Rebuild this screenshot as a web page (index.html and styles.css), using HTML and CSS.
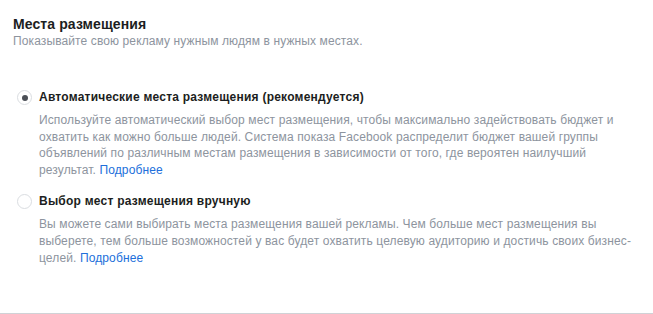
FILE: index.html
```html
<!DOCTYPE html>
<html lang="ru">
<head>
<meta charset="utf-8">
<link rel="stylesheet" href="styles.css">
</head>
<body>
<section class="section">
  <h2 class="title">Места размещения</h2>
  <p class="subtitle">Показывайте свою рекламу нужным людям в нужных местах.</p>
  <div class="options">
    <div class="option">
      <span class="radio radio-checked"></span>
      <div class="option-body">
        <div class="option-label">Автоматические места размещения (рекомендуется)</div>
        <p class="option-desc">Используйте автоматический выбор мест размещения, чтобы максимально задействовать бюджет и охватить как можно больше людей. Система показа Facebook распределит бюджет вашей группы объявлений по различным местам размещения в зависимости от того, где вероятен наилучший результат. <a class="link" href="#">Подробнее</a></p>
      </div>
    </div>
    <div class="option">
      <span class="radio"></span>
      <div class="option-body">
        <div class="option-label">Выбор мест размещения вручную</div>
        <p class="option-desc">Вы можете сами выбирать места размещения вашей рекламы. Чем больше мест размещения вы выберете, тем больше возможностей у вас будет охватить целевую аудиторию и достичь своих бизнес-целей. <a class="link" href="#">Подробнее</a></p>
      </div>
    </div>
  </div>
</section>
</body>
</html>
```
FILE: styles.css
```css
html, body {
  margin: 0;
  padding: 0;
  background: #ffffff;
}
body {
  font-family: "Liberation Sans", Arial, sans-serif;
  color: #1c1e21;
}
.section {
  box-sizing: border-box;
  height: 314px;
  padding: 15px 13px 0;
  border-bottom: 1px solid #d0d2d6;
}
.title {
  margin: 0;
  font-size: 14px;
  line-height: 18px;
  font-weight: bold;
  letter-spacing: 0.1px;
  color: #1c1e21;
}
.subtitle {
  margin: 0;
  font-size: 12px;
  line-height: 16px;
  letter-spacing: 0.11px;
  color: #8d949e;
}
.options {
  margin-top: 40px;
  display: flex;
  flex-direction: column;
  gap: 15px;
}
.option {
  display: flex;
  gap: 7px;
  align-items: flex-start;
  padding-left: 4px;
}
.radio {
  flex: none;
  width: 15px;
  height: 15px;
  margin-top: 1px;
  box-sizing: border-box;
  border: 1px solid #dadde1;
  border-radius: 50%;
  display: flex;
  align-items: center;
  justify-content: center;
  background: #fff;
}
.radio-checked::after {
  content: "";
  width: 6px;
  height: 6px;
  border-radius: 50%;
  background: #4b4f56;
}
.option-body {
  width: 595px;
}
.option-label {
  font-size: 12px;
  line-height: 16px;
  font-weight: bold;
  letter-spacing: 0.23px;
  color: #1c1e21;
}
.option-desc {
  margin: 7px 0 0;
  font-size: 12px;
  line-height: 16.6px;
  letter-spacing: 0.12px;
  color: #8d949e;
}
.link {
  color: #216fdb;
  text-decoration: none;
}
```
